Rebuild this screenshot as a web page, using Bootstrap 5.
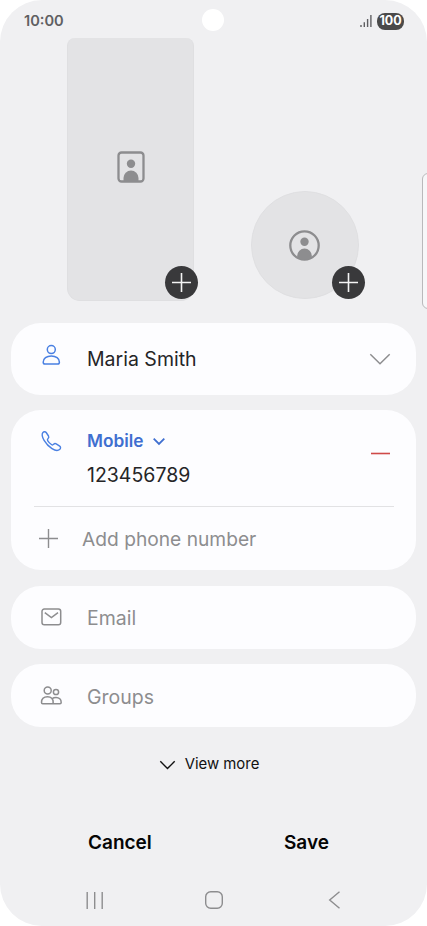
<!DOCTYPE html>
<html lang="en">
<head>
<meta charset="utf-8">
<meta name="viewport" content="width=device-width, initial-scale=1">
<title>Edit contact</title>
<link href="https://cdn.jsdelivr.net/npm/bootstrap@5.3.0/dist/css/bootstrap.min.css" rel="stylesheet">
<style>
body{background:#fff;font-family:Inter,"Liberation Sans",sans-serif;color:#252527;line-height:1;overflow:hidden}
svg{display:block;flex:none;fill:none;stroke:currentColor;overflow:visible}
.phone{width:427px;height:926px;background:#f0f0f2;border-radius:42px}
.status{height:38px;padding:4px 23px 0 24px;color:#5f5f62;font-size:14.6px;font-weight:600}
.camera{width:22px;height:22px;left:202px;top:9px;background:#fff}
.battery{width:27px;height:17px;background:#4a4a4a;color:#fff;font-size:12.5px;font-weight:700;border-radius:8px;padding-top:1px}
.photos{height:285px;padding:0 68.5px 0 67px}
.poster{width:127px;height:262.5px;background:#e3e3e5;border:1px solid #dfdfe1;border-top-width:0;border-radius:8px 8px 13px 13px;color:#8d8d8f}
.poster-icon{margin:113px 0 0 0}
.avatar{width:108px;height:108px;margin-top:153px;background:#e3e3e5;border:1px solid #dfdfe1;color:#8d8d8f}
.add{width:33px;height:33px;background:#39393b;color:#f4f4f4}
.add:hover{background:#39393b;color:#f4f4f4}
.poster .add{right:-5px;bottom:.5px}
.avatar .add{right:-7px;bottom:-1px}
.edge{width:12px;height:136px;left:422px;top:173px;border:1px solid #b9b9bb;border-radius:6px;background:#f7f7f9}
.cards{padding:0 11px;gap:15.5px}
.panel{background:#fdfdff;border-radius:30px;font-size:19.5px}
.ico{width:76px;padding-left:29px;flex:none}
.name{height:71.5px;padding-right:26px}
.person{margin-bottom:7px}
.phonebox{height:160px}
.entry{height:95.5px;padding:20px 26px 0 0}
.kind{font-size:17.3px;height:22px;gap:9px}
.number{margin-top:13.8px}
.minus{margin-top:22px}
.rule{height:1px;background:#e2e2e4;margin:0 22px 0 23px}
.addrow{height:63.5px;font-size:19.2px;padding:2px 0 0 28px;gap:24px}
.plus-line{margin-top:-2px}
.slim{height:63px}
.name .label{padding-top:2px}
.slim .label{padding-top:4px}
.blue{color:#3f6fd0}
.blue-ico{color:#4a80e2}
.grey{color:#8d8d8f}
.more{height:73px;padding:2px 8px 0 0;gap:10px;font-size:14.9px;color:#111}
.actions{height:84px;padding:0 98px 0 88px;font-size:19px;font-weight:600;color:#050505}
.navkeys{color:#8d8d8f;height:32px;padding:0 87px 0 86px}
.home{margin-right:5px}
</style>
</head>
<body>
<main class="phone position-relative overflow-hidden">
  <header class="status d-flex align-items-center justify-content-between">
    <span>10:00</span>
    <span class="camera position-absolute rounded-circle"></span>
    <span class="d-flex align-items-center">
      <svg width="12" height="12" stroke-width="1.4" class="me-1"><path d="M0 10v2M3.300 7.200V12M6.600 4V12M9.900 0V12"/></svg>
      <span class="battery d-flex align-items-center justify-content-center">100</span>
    </span>
  </header>

  <section class="photos d-flex justify-content-between align-items-start">
    <div class="poster position-relative d-flex justify-content-center">
      <svg class="poster-icon" width="28" height="32" viewBox="0 0 28 32" stroke-width="2.3"><rect x="1.500" y="1.500" width="25" height="29" rx="3"/><g fill="currentColor" stroke="none"><circle cx="14" cy="12.800" r="4.200"/><path d="M6.500 30v-3a7.500 7.500 0 0 1 15 0v3z"/></g></svg>
      <button class="add btn p-0 border-0 rounded-circle position-absolute d-flex align-items-center justify-content-center" aria-label="Add poster"><svg width="19" height="19" stroke-width="1.600"><path d="M0 9.500H19M9.500 0V19"/></svg></button>
    </div>
    <div class="avatar rounded-circle position-relative d-flex align-items-center justify-content-center">
      <svg width="31" height="31" viewBox="0 0 31 31" stroke-width="2.300"><circle cx="15.500" cy="15.500" r="14.200"/><g fill="currentColor" stroke="none"><circle cx="15.500" cy="11.800" r="4.200"/><path d="M8.200 28v-2.200a7.300 7.300 0 0 1 14.600 0V28q-3 2-7.300 2t-7.300-2z"/></g></svg>
      <button class="add btn p-0 border-0 rounded-circle position-absolute d-flex align-items-center justify-content-center" aria-label="Add photo"><svg width="19" height="19" stroke-width="1.600"><path d="M0 9.500H19M9.500 0V19"/></svg></button>
    </div>
  </section>
  <div class="edge position-absolute"></div>

  <section class="cards d-flex flex-column">
    <div class="panel name d-flex align-items-center">
      <span class="ico blue-ico"><svg class="person" width="22" height="20" viewBox="0 0 22 20" stroke-width="1.500"><circle cx="11.300" cy="4.600" r="4"/><path d="M5 19h12.600q1.800 0 1.800-1.800c0-3.700-3.400-6.200-8.100-6.200s-8.100 2.500-8.100 6.200Q3.200 19 5 19z"/></svg></span>
      <span class="label flex-grow-1">Maria Smith</span>
      <svg class="grey" width="20" height="10" stroke-width="1.500"><path d="M.3.300 10 9.700 19.700.3"/></svg>
    </div>

    <div class="panel phonebox">
      <div class="entry d-flex align-items-start">
        <span class="ico blue-ico"><svg width="22" height="22" viewBox="0 0 22 22" stroke-width="1.400" stroke-linejoin="round"><path d="M2.800 2.700C3.700 1.500 5.300 1.300 6.200 2.500L8.500 6c.6 1 .3 1.900-.6 2.700-.7.700-.7 1.300-.1 2.200 1 1.500 2.100 2.600 3.600 3.600.9.600 1.500.6 2.100-.1.800-.9 1.700-1.200 2.700-.6l3.500 2.300c1.200.9 1.100 2.400-.1 3.400-1.700 1.500-4.500 1.100-7.600-.9-3.200-2-5.900-4.800-7.900-8.200C2.300 7.300 1.500 4.500 2.800 2.700z"/></svg></span>
        <div class="flex-grow-1">
          <div class="kind blue d-flex align-items-center fw-semibold">Mobile<svg width="12" height="7" stroke-width="1.800"><path d="M.7.700 6 5.900 11.300.7"/></svg></div>
          <div class="number">123456789</div>
        </div>
        <svg class="minus" width="19" height="3" stroke-width="1.600"><path d="M0 1.500H19" stroke="#cf4a48"/></svg>
      </div>
      <div class="rule"></div>
      <div class="addrow grey d-flex align-items-center"><svg class="plus-line" width="19" height="19" stroke-width="1.400"><path d="M0 9.500H19M9.500 0V19"/></svg><span>Add phone number</span></div>
    </div>

    <div class="panel slim grey d-flex align-items-center"><span class="ico"><svg width="22" height="18" viewBox="0 0 22 18" stroke-width="1.500"><rect x="2" y="1" width="18.700" height="15.800" rx="2.300"/><path d="M4.800 4.700 11.400 9.600 18 4.700"/></svg></span><span class="label">Email</span></div>
    <div class="panel slim grey d-flex align-items-center"><span class="ico"><svg width="22" height="19" viewBox="0 0 22 19" stroke-width="1.500"><circle cx="7.700" cy="4.600" r="3.500"/><circle cx="16" cy="6" r="2.600"/><path d="M2.700 17.700H12q1.200 0 1.200-1.200c0-3.700-2.200-5.800-5.700-5.800s-6 2.100-6 5.800q0 1.200 1.200 1.200zM12 17.700h8q1.200 0 1.200-1.200c0-3.200-2-5-5.200-5-1.700 0-2.900.4-3.800 1.200"/></svg></span><span class="label">Groups</span></div>
  </section>

  <div class="more d-flex align-items-center justify-content-center"><svg width="15" height="8" stroke-width="1.400"><path d="M.3.300 7.500 7.500 14.700.3"/></svg><span>View more</span></div>
  <div class="actions d-flex align-items-center justify-content-between"><span>Cancel</span><span>Save</span></div>
  <nav class="navkeys d-flex align-items-center justify-content-between">
    <svg width="17" height="17" stroke-width="1.400"><path d="M1.200 0V17M8.700 0V17M16.200 0V17"/></svg>
    <svg class="home" width="18" height="18" stroke-width="1.400"><rect x=".7" y=".7" width="16.600" height="16.600" rx="5"/></svg>
    <svg width="11" height="18" stroke-width="1.400"><path d="M10.500.7.700 9 10.500 17.300"/></svg>
  </nav>
</main>
<script src="https://cdn.jsdelivr.net/npm/bootstrap@5.3.0/dist/js/bootstrap.bundle.min.js"></script>
</body>
</html>
